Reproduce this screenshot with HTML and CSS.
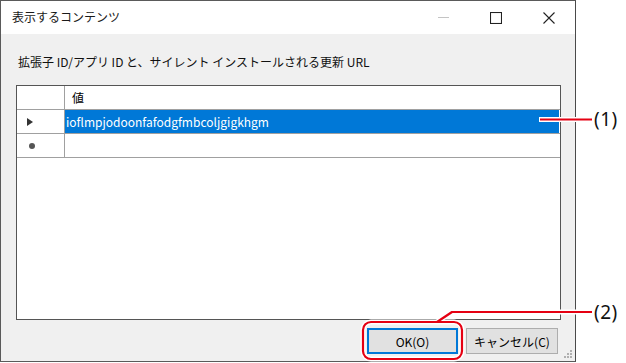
FILE: index.html
```html
<!DOCTYPE html>
<html lang="ja">
<head>
<meta charset="utf-8">
<link rel="stylesheet" href="styles.css">
</head>
<body>
<div class="page">
  <div class="window">
    <div class="titlebar">
      <span class="title">表示するコンテンツ</span>
      <div class="controls">
        <svg class="ctl" width="11" height="11" viewBox="0 0 11 11"><line x1="0" y1="5.5" x2="11" y2="5.5" stroke="#c4c4c4" stroke-width="1"/></svg>
        <svg class="ctl" width="12" height="12" viewBox="0 0 12 12"><rect x="0.5" y="0.5" width="11" height="11" fill="none" stroke="#222" stroke-width="1.1"/></svg>
        <svg class="ctl" width="12" height="12" viewBox="0 0 12 12"><path d="M0.5 0.5 L11.5 11.5 M11.5 0.5 L0.5 11.5" stroke="#222" stroke-width="1.1"/></svg>
      </div>
    </div>
    <div class="body">
      <div class="label">拡張子 ID/アプリ ID と、サイレント インストールされる更新 URL</div>
      <div class="grid">
        <div class="row head">
          <div class="rh"></div>
          <div class="cell">値</div>
        </div>
        <div class="row">
          <div class="rh"><span class="arrow"></span></div>
          <div class="cell sel">ioflmpjodoonfafodgfmbcoljgigkhgm</div>
        </div>
        <div class="row">
          <div class="rh"><span class="star"></span></div>
          <div class="cell"></div>
        </div>
      </div>
      <div class="buttons">
        <button class="btn default">OK(O)</button>
        <button class="btn">キャンセル(C)</button>
      </div>
      <svg class="grip" width="8" height="8" viewBox="0 0 8 8" fill="#b0b0b0">
        <rect x="6" y="0" width="2" height="2"/>
        <rect x="3" y="3" width="2" height="2"/><rect x="6" y="3" width="2" height="2"/>
        <rect x="0" y="6" width="2" height="2"/><rect x="3" y="6" width="2" height="2"/><rect x="6" y="6" width="2" height="2"/>
      </svg>
    </div>
  </div>
  <svg class="callouts" width="626" height="363" viewBox="0 0 626 363">
    <g fill="none" stroke="#fff" stroke-width="5" stroke-linejoin="round">
      <line x1="539" y1="119.5" x2="592" y2="119.5"/>
      <rect x="363" y="322" width="99" height="37" rx="8"/>
      <polyline points="437,322 452,312 592,312"/>
    </g>
    <g fill="none" stroke="#e50012" stroke-width="2.2" stroke-linejoin="round">
      <line x1="540" y1="119.5" x2="592" y2="119.5"/>
      <rect x="363" y="322" width="99" height="37" rx="8"/>
      <polyline points="437,322 452,312 592,312"/>
    </g>
    <text x="594" y="126" class="note">(1)</text>
    <text x="594" y="319" class="note">(2)</text>
  </svg>
</div>
</body>
</html>
```

FILE: styles.css
```css
html, body {
  margin: 0;
  padding: 0;
  background: #ffffff;
}
body {
  font-family: "Noto Sans CJK JP", "Noto Sans", sans-serif;
  font-size: 12px;
  color: #000;
}
.page {
  position: relative;
  width: 626px;
  height: 363px;
  overflow: hidden;
}
.window {
  width: 574px;
  height: 360px;
  border: 1px solid #5a5a5a;
  border-right-color: #4a4a4a;
  display: flex;
  flex-direction: column;
  background: #f0f0f0;
}
.titlebar {
  height: 33px;
  background: #ffffff;
  display: flex;
  align-items: center;
  flex: none;
}
.title {
  margin-left: 11px;
  font-size: 12px;
  color: #1a1a1a;
  position: relative;
  top: -1px;
}
.controls {
  margin-left: auto;
  margin-right: 20px;
  display: flex;
  align-items: center;
  gap: 41px;
}
.ctl { display: block; }
.body {
  position: relative;
  flex: 1;
  padding: 0 14px 0 15px;
  display: flex;
  flex-direction: column;
}
.label {
  margin-top: 19px;
  margin-left: 2px;
  height: 17px;
  line-height: 17px;
  font-size: 12px;
  color: #111;
}
.grid {
  margin-top: 15px;
  width: 543px;
  height: 233px;
  border: 1px solid #555;
  background: #fff;
  box-sizing: content-box;
}
.row {
  display: flex;
  height: 23px;
  border-bottom: 1px solid #a0a0a0;
}
.rh {
  width: 47px;
  border-right: 1px solid #a0a0a0;
  display: flex;
  align-items: center;
  flex: none;
}
.cell {
  flex: 1;
  display: flex;
  align-items: center;
  padding-left: 1px;
  font-size: 12px;
}
.head .cell {
  padding-left: 7px;
}
.cell.sel {
  background: #0078d7;
  color: #fff;
  margin-right: 1px;
}
.arrow {
  margin-left: 10px;
  width: 0;
  height: 0;
  border-top: 4.5px solid transparent;
  border-bottom: 4.5px solid transparent;
  border-left: 6px solid #333;
}
.star {
  margin-left: 12px;
  width: 6px;
  height: 6px;
  border-radius: 50%;
  background: #555;
}
.buttons {
  margin-top: 8px;
  display: flex;
  justify-content: flex-end;
  gap: 8px;
  padding-right: 3px;
}
.btn {
  font-family: inherit;
  font-size: 12px;
  height: 26px;
  width: 92px;
  background: #e1e1e1;
  border: 1px solid #adadad;
  color: #000;
  padding: 0;
  margin: 0;
}
.btn.default {
  width: 91px;
  border: 2px solid #0078d7;
}
.grip {
  position: absolute;
  right: 3px;
  bottom: 3px;
}
.callouts {
  position: absolute;
  left: 0;
  top: 0;
  pointer-events: none;
}
.note {
  font-family: "Noto Sans", "DejaVu Sans", sans-serif;
  font-size: 19px;
  letter-spacing: 0.5px;
  fill: #111;
}
```
